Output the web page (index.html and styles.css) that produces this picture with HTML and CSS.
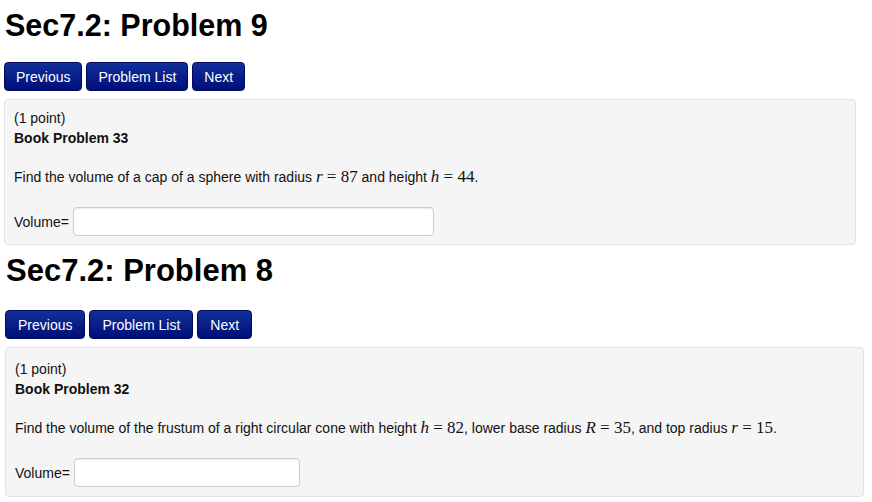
FILE: index.html
```html
<!DOCTYPE html>
<html lang="en">
<head>
  <meta charset="UTF-8">
  <title>Sec7.2 Problems</title>
  <link rel="stylesheet" href="styles.css">
</head>
<body>
  <div class="page">
    <h1 class="title">Sec7.2: Problem 9</h1>
    <div class="nav">
      <span class="btn">Previous</span>
      <span class="btn">Problem List</span>
      <span class="btn">Next</span>
    </div>
    <div class="problem">
      <div>(1 point)</div>
      <div class="book">Book Problem 33</div>
      <p class="text">Find the volume of a cap of a sphere with radius <span class="math"><i>r</i> = 87</span> and height <span class="math"><i>h</i> = 44</span>.</p>
      <div class="answer">Volume= <input type="text" class="ans wide"></div>
    </div>
  </div>

  <div class="page second">
    <h1 class="title">Sec7.2: Problem 8</h1>
    <div class="nav">
      <span class="btn">Previous</span>
      <span class="btn">Problem List</span>
      <span class="btn">Next</span>
    </div>
    <div class="problem">
      <div>(1 point)</div>
      <div class="book">Book Problem 32</div>
      <p class="text">Find the volume of the frustum of a right circular cone with height <span class="math"><i>h</i> = 82</span>, lower base radius <span class="math"><i>R</i> = 35</span>, and top radius <span class="math"><i>r</i> = 15</span>.</p>
      <div class="answer">Volume= <input type="text" class="ans narrow"></div>
    </div>
  </div>
</body>
</html>
```

FILE: styles.css
```css
body{
  margin: 0;
  padding: 0;
  background: #fff;
  font-family: "Liberation Sans", Arial, Helvetica, sans-serif;
  font-size: 14px;
  color: #111;
}

.page{
  margin-left: 4px;
  width: 852px;
}
.page.second{
  margin-left: 5px;
  width: 859px;
}

.title{
  margin: 5px 0 0 1px;
  font-size: 30.5px;
  line-height: 40px;
  font-weight: bold;
  color: #000;
}
.second .title{
  font-size: 31px;
  margin-top: 6px;
}

.nav{
  display: flex;
  gap: 4px;
  margin-top: 17px;
}
.second .nav{
  margin-top: 19px;
}

.btn{
  display: inline-block;
  padding: 4px 11px;
  line-height: 20px;
  font-size: 14px;
  color: #fff;
  background: linear-gradient(#10309a, #000e78);
  border: 1px solid #00095c;
  border-radius: 4px;
  box-sizing: border-box;
  height: 29px;
}
.second .btn{
  padding: 4px 12px;
}

.problem{
  margin-top: 8px;
  padding: 8px 9px 8px 9px;
  background: #f5f5f5;
  border: 1px solid #e3e3e3;
  border-radius: 4px;
  line-height: 20px;
}
.second .problem{
  padding-top: 11px;
  padding-bottom: 9px;
}

.book{
  font-weight: bold;
}

.text{
  margin: 19px 0 0 0;
}

.math{
  font-family: "Liberation Serif", "Times New Roman", serif;
  font-size: 17px;
  white-space: nowrap;
}

.answer{
  margin-top: 20px;
  display: flex;
  align-items: center;
  gap: 4px;
}

.ans{
  height: 29px;
  box-sizing: border-box;
  border: 1px solid #ccc;
  border-radius: 4px;
  background: #fff;
  box-shadow: inset 0 1px 1px rgba(0,0,0,0.075);
  margin: 0;
  padding: 4px 6px;
  font: inherit;
}
.ans.wide{
  width: 361px;
}
.ans.narrow{
  width: 226px;
}
```
